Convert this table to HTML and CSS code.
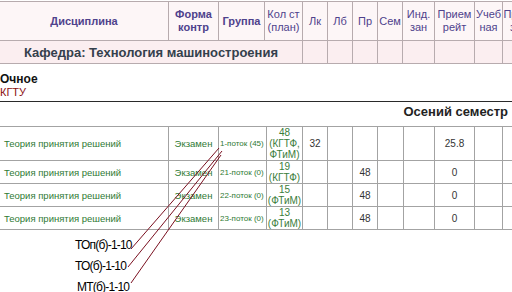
FILE: index.html
```html
<!DOCTYPE html>
<html lang="ru">
<head>
<meta charset="utf-8">
<title>Расписание</title>
<link rel="stylesheet" href="styles.css">
</head>
<body>
<div class="page">
  <table class="head">
    <colgroup>
      <col class="w-disc"><col class="w-form"><col class="w-grp-h"><col class="w-kol-h">
      <col class="w-25"><col class="w-25"><col class="w-25"><col class="w-25">
      <col class="w-ind-h"><col class="w-40"><col class="w-28"><col class="w-32">
    </colgroup>
    <tr class="hrow">
      <th class="bold">Дисциплина</th>
      <th class="bold">Форма<br>контр</th>
      <th class="bold">Группа</th>
      <th>Кол ст<br>(план)</th>
      <th>Лк</th>
      <th>Лб</th>
      <th>Пр</th>
      <th>Сем</th>
      <th>Инд.<br>зан</th>
      <th>Прием<br>рейт</th>
      <th>Учеб<br>ная</th>
      <th>Практ<br>зан</th>
    </tr>
    <tr class="krow">
      <td colspan="4" class="kaf">Кафедра: Технология машиностроения</td>
      <td></td><td></td><td></td><td></td><td></td><td></td><td></td><td></td>
    </tr>
  </table>

  <div class="form">
    <div class="ochnoe">Очное</div>
    <div class="kgtu">КГТУ</div>
  </div>

  <div class="sem">Осений семестр</div>

  <table class="data">
    <colgroup>
      <col class="w-disc"><col class="w-form"><col class="w-grp"><col class="w-kol">
      <col class="w-25"><col class="w-25"><col class="w-25"><col class="w-26">
      <col class="w-31"><col class="w-40"><col class="w-28"><col class="w-32">
    </colgroup>
    <tr class="r1">
      <td class="disc">Теория принятия решений</td>
      <td class="fc">Экзамен</td>
      <td class="grp">1-поток (45)</td>
      <td class="kol">48<br>(КГТФ,<br>ФТиМ)</td>
      <td class="num">32</td><td></td><td></td><td></td><td></td>
      <td class="num">25.8</td><td></td><td></td>
    </tr>
    <tr class="r2">
      <td class="disc">Теория принятия решений</td>
      <td class="fc">Экзамен</td>
      <td class="grp">21-поток (0)</td>
      <td class="kol">19<br>(КГТФ)</td>
      <td></td><td></td><td class="num">48</td><td></td><td></td>
      <td class="num">0</td><td></td><td></td>
    </tr>
    <tr class="r2">
      <td class="disc">Теория принятия решений</td>
      <td class="fc">Экзамен</td>
      <td class="grp">22-поток (0)</td>
      <td class="kol">15<br>(ФТиМ)</td>
      <td></td><td></td><td class="num">48</td><td></td><td></td>
      <td class="num">0</td><td></td><td></td>
    </tr>
    <tr class="r2">
      <td class="disc">Теория принятия решений</td>
      <td class="fc">Экзамен</td>
      <td class="grp">23-поток (0)</td>
      <td class="kol">13<br>(ФТиМ)</td>
      <td></td><td></td><td class="num">48</td><td></td><td></td>
      <td class="num">0</td><td></td><td></td>
    </tr>
  </table>

  <div class="groups">
    <div class="gl">ТОп(б)-1-10</div>
    <div class="gl">ТО(б)-1-10</div>
    <div class="gl gl3">МТ(б)-1-10</div>
  </div>

  <svg class="links" width="512" height="292" viewBox="0 0 512 292">
    <line x1="219" y1="148" x2="131" y2="249"/>
    <line x1="222" y1="151" x2="128" y2="267"/>
    <line x1="221" y1="155" x2="131" y2="283"/>
  </svg>
</div>
</body>
</html>
```

FILE: styles.css
```css
html, body {
  margin: 0;
  padding: 0;
  overflow: hidden;
  background: #ffffff;
}

.page {
  position: relative;
  width: 512px;
  height: 292px;
  overflow: hidden;
  font-family: "Liberation Sans", Arial, sans-serif;
}

table {
  border-collapse: collapse;
  table-layout: fixed;
  width: 535px;
  margin-left: -1px;
}

.w-disc { width: 169px; }
.w-form { width: 50px; }
.w-grp-h { width: 46px; }
.w-grp { width: 48px; }
.w-kol-h { width: 38px; }
.w-kol { width: 36px; }
.w-25 { width: 25px; }
.w-26 { width: 26px; }
.w-31 { width: 31px; }
.w-ind-h { width: 32px; }
.w-40 { width: 40px; }
.w-28 { width: 28px; }
.w-32 { width: 32px; }

/* header table */
.head {
  margin-top: 1px;
}

.head th,
.head td {
  border: 1px solid #b7abae;
  padding: 0;
  overflow: hidden;
  white-space: nowrap;
}

.hrow th {
  height: 38px;
  background: #fdf6f7;
  color: #4f428c;
  font-size: 11px;
  font-weight: normal;
  line-height: 13px;
  text-align: center;
}

.hrow th.bold {
  font-weight: bold;
}

.krow td {
  height: 22px;
  background: #fbeef0;
}

.krow td.kaf {
  text-align: center;
  font-size: 13px;
  font-weight: bold;
  color: #34404c;
}

/* form of study */
.form {
  margin-top: 8px;
}

.ochnoe {
  font-size: 12px;
  line-height: 14px;
  font-weight: bold;
  color: #111111;
}

.kgtu {
  font-size: 11px;
  line-height: 13px;
  color: #8a0e0e;
}

.sem {
  margin-top: 2px;
  border-top: 1px solid #2a2a2a;
  padding: 0 4px 4px 0;
  line-height: 20px;
  font-size: 13px;
  font-weight: bold;
  color: #222222;
  text-align: right;
}

/* data table */
.data td {
  border: 1px solid #a3a3a3;
  padding: 0;
  overflow: hidden;
  white-space: nowrap;
  font-size: 10px;
  color: #333333;
  text-align: center;
}

.data tr.r1 td { height: 33px; }
.data tr.r2 td { height: 22px; }

.data td.disc {
  text-align: left;
  padding-left: 4px;
  font-size: 9.5px;
  color: #2f7a34;
}

.data td.fc {
  font-size: 9.5px;
  color: #2f7a34;
}

.data td.grp {
  text-align: left;
  padding-left: 1px;
  font-size: 8px;
  color: #2f7a34;
}

.data td.kol {
  line-height: 11px;
  font-size: 10px;
  color: #3a7d3a;
}

.data td.num {
  color: #333333;
}

/* group labels */
.groups {
  margin-top: 5px;
  padding-left: 75px;
}

.gl {
  font-size: 12px;
  line-height: 21px;
  letter-spacing: -0.8px;
  color: #000000;
}

.gl3 {
  padding-left: 2px;
}

.links {
  position: absolute;
  left: 0;
  top: 0;
  pointer-events: none;
}

.links line {
  stroke: #7a1020;
  stroke-width: 1;
}
```
